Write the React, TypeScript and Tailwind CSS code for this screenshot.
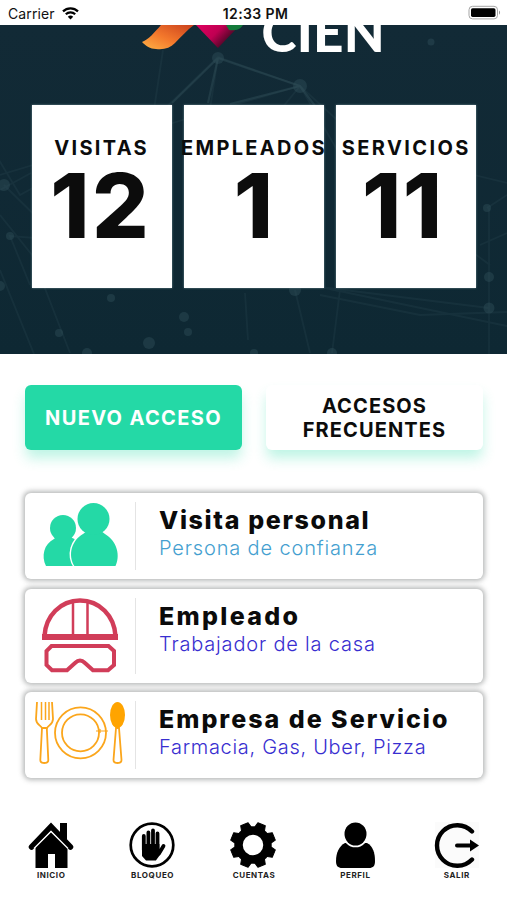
import type { ReactNode } from "react";

interface Stat {
  label: string;
  value: number;
  labelClass: string;
  valueClass: string;
}

interface AccessType {
  title: string;
  detail: string;
  titleClass: string;
  detailClass: string;
  rowClass: string;
  icon: ReactNode;
}

interface NavItem {
  label: string;
  icon: ReactNode;
}

function StatusBar() {
  return (
    <div className="relative z-10 flex h-[25px] shrink-0 items-center justify-between bg-white pl-2 pr-1.5 text-[#111]">
      <div className="flex w-[160px] items-center gap-[7px] pt-0.5">
        <span className="text-[14px] leading-none tracking-[0.1px]">Carrier</span>
        <svg width="17" height="13" viewBox="0 0 17 13" fill="none" stroke="#000" strokeWidth="2.2">
          <path d="M1 4.4a10.6 10.6 0 0 1 15 0" />
          <path d="M3.8 7.3a6.7 6.7 0 0 1 9.4 0" />
          <path d="M8.5 12.6 5.8 9.8a3.9 3.9 0 0 1 5.4 0z" fill="#000" stroke="none" />
        </svg>
      </div>
      <span className="whitespace-nowrap pl-0.5 pt-0.5 text-center text-[14px] font-semibold leading-none tracking-[0.4px]">
        12:33 PM
      </span>
      <div className="flex w-[160px] justify-end">
        <svg width="33" height="15" viewBox="0 0 33 15">
          <rect x="1" y="1.3" width="28.5" height="12.6" rx="3.5" fill="#fff" stroke="#a5a5a5" />
          <rect x="3" y="3.3" width="24.5" height="8.6" rx="1.6" fill="#000" />
          <path d="M31 5.5c1.4.6 1.4 3.6 0 4.2z" fill="#999" />
        </svg>
      </div>
    </div>
  );
}

const NODES = [
  [218, 33, 6], [300, 61, 7], [431, 17, 3.5], [4, 160, 6], [10, 211, 4], [0, 261, 5], [111, 273, 4],
  [184, 292, 5], [188, 307, 4], [149, 318, 6], [59, 308, 4], [87, 328, 5], [487, 183, 4], [489, 252, 5],
  [489, 283, 5.5], [295, 265, 6], [332, 328, 5], [254, 328, 4],
];

const LINKS = [
  "M218 32 300 61 370 125 507 158", "M218 32 150 98 20 170-10 120", "M218 32 206 110", "M163 25 152 98",
  "M300 61 206 88 0 150", "M300 61 340 130 490 240", "M4 160 60 215 10 211 30 260",
  "M0 190 32 230 70 328", "M0 165 31 148", "M489 183V329", "M489 283 320 262 507 301", "M295 265 310 328",
  "M487 183 507 170", "M340 265 332 328", "M245 268 248 315", "M300 61 260 110",
  "M320 270 420 290 507 287", "M480 220 507 208", "M0 245 34 329",
];

function Network() {
  return (
    <svg className="absolute inset-0 h-full w-full" viewBox="0 0 507 329" preserveAspectRatio="none">
      <g fill="none" stroke="#2d4b55" strokeWidth="1.8" opacity="0.25">
        {LINKS.map((d) => (
          <path key={d} d={d} />
        ))}
      </g>
      <g fill="#32525c" opacity="0.42">
        {NODES.map(([x, y, r]) => (
          <circle key={`${x}-${y}`} cx={x} cy={y} r={r} />
        ))}
      </g>
      <path d="M218 33 172 78M218 33l82 28 18 24M218 33l-10 45M300 61l-70 18" stroke="#2d4b55" strokeWidth="2.2" opacity="0.5" fill="none" />
    </svg>
  );
}

function Logo() {
  return (
    <div className="relative flex h-[27px] items-end pl-[142px]">
      <svg width="102" height="27" viewBox="0 0 102 27" className="shrink-0">
        <defs>
          <linearGradient id="ribbon" x1="0" y1="1" x2="1" y2="0">
            <stop offset="0" stopColor="#ffb347" />
            <stop offset="0.45" stopColor="#f4792c" />
            <stop offset="1" stopColor="#c9401d" />
          </linearGradient>
          <linearGradient id="gem" x1="0" y1="0" x2="1" y2="0.5">
            <stop offset="0" stopColor="#e0005f" />
            <stop offset="0.5" stopColor="#c00052" />
            <stop offset="1" stopColor="#1c0a14" />
          </linearGradient>
        </defs>
        <path d="M0 17C7 14 12 8 19 0h33c-7 5-13 12-19 18-5 5-11 7-19 6-6 0-10-3-14-7z" fill="url(#ribbon)" />
        <path d="M54 0h44L76 23z" fill="url(#gem)" />
        <path d="M84 0h17c-3 5-9 6-14 5z" fill="#137a3a" />
      </svg>
      <span className="mb-[3.5px] ml-[17.5px] whitespace-nowrap font-['Lato',sans-serif] text-[53px] font-black leading-[35px] tracking-[0.3px] text-white">
        CIEN
      </span>
    </div>
  );
}

const STATS: Stat[] = [
  { label: "VISITAS", value: 12, labelClass: "tracking-[2.3px]", valueClass: "tracking-[2.5px] mr-[2px]" },
  { label: "EMPLEADOS", value: 1, labelClass: "tracking-[2.3px]", valueClass: "mr-[1px]" },
  { label: "SERVICIOS", value: 11, labelClass: "tracking-[2.4px]", valueClass: "tracking-[1.5px] mr-[7px]" },
];

function StatCard({ stat }: { stat: Stat }) {
  return (
    <div className="flex h-[183px] min-w-0 flex-1 flex-col items-center bg-white pt-[31px] text-[#0c0c0c] shadow-[0_0_2px_#6f8b94]">
      <span className={`whitespace-nowrap text-[20px] font-bold leading-6 ${stat.labelClass}`}>{stat.label}</span>
      <span className={`text-[89px] font-extrabold leading-[92px] ${stat.valueClass}`}>{stat.value}</span>
    </div>
  );
}

function PeopleIcon() {
  return (
    <svg width="100" height="86" viewBox="0 0 100 86" fill="#24d9a6">
      <circle cx="38" cy="35" r="13" />
      <path d="M21 73c-5-10-2-22 8-27l2-2h14l9 4 1 25z" />
      <path
        d="M50 74c-8-12-3-27 8-33l4-3h14l4 3c12 7 16 22 10 33z"
        stroke="#fff"
        strokeWidth="3"
        className="[paint-order:stroke]"
      />
      <circle cx="68.5" cy="26" r="16" />
      <path d="M17 73h79v3H17z" fill="#fff" />
    </svg>
  );
}

function HelmetIcon() {
  return (
    <svg width="100" height="94" viewBox="0 0 100 94" fill="none" stroke="#d13d59">
      <path d="M19.5 47c1-20 16-35.500 35.500-35.500S89.500 27 90.500 47" strokeWidth="4.500" />
      <path d="M17 48h76" strokeWidth="6" />
      <path d="M48 13v33M62.500 13v33" strokeWidth="2.500" />
      <path
        d="M26.500 57h57l5.500 5v14l-6 5.300h-15L60 74q-5-5-10 0l-8 7.300H27L21.500 76V62z"
        strokeWidth="4"
      />
    </svg>
  );
}

function DinnerIcon() {
  return (
    <svg width="104" height="86" viewBox="0 0 104 86" fill="none" stroke="#fba61c" strokeWidth="1.800">
      <circle cx="55.500" cy="40.800" r="25.500" />
      <circle cx="55.500" cy="40.800" r="18.500" />
      <path d="M71 39h12M75 37v4" strokeWidth="1.200" />
      <path d="M12 10l-1 17c0 5 4 6 6 9h5c2-3 6-4 6-9l-1-17" />
      <path d="M16.500 10v18M20.500 10v18M24 10v18" strokeWidth="1.500" />
      <path d="M17 36l-1.700 32c0 4 8 4 8 0L21.800 36z" />
      <path d="M91 36l-2.500 32c0 4 8 4 8 0L94 36z" />
      <ellipse cx="92.500" cy="23" rx="7.500" ry="13" fill="#ffa400" stroke="none" />
    </svg>
  );
}

const ACCESS_TYPES: AccessType[] = [
  {
    title: "Visita personal",
    detail: "Persona de confianza",
    titleClass: "tracking-[1.65px]",
    detailClass: "text-[#459fd0] tracking-[0.85px]",
    rowClass: "h-[86px]",
    icon: <PeopleIcon />,
  },
  {
    title: "Empleado",
    detail: "Trabajador de la casa",
    titleClass: "tracking-[2.3px]",
    detailClass: "text-[#382ed0] tracking-[0.82px]",
    rowClass: "h-[94px]",
    icon: <HelmetIcon />,
  },
  {
    title: "Empresa de Servicio",
    detail: "Farmacia, Gas, Uber, Pizza",
    titleClass: "tracking-[2px]",
    detailClass: "text-[#382ed0] tracking-[0.7px]",
    rowClass: "h-[86px]",
    icon: <DinnerIcon />,
  },
];

function AccessRow({ item }: { item: AccessType }) {
  return (
    <div
      className={`flex rounded-[6px] bg-white shadow-[0_0_5px_2px_rgba(95,100,100,0.45)] ${item.rowClass}`}
    >
      <div className="flex w-[110px] shrink-0 items-center">{item.icon}</div>
      <div className="my-[9px] w-px shrink-0 bg-[#e4e4e4]" />
      <div className="flex flex-col pl-[23px] pt-[13px]">
        <span className={`whitespace-nowrap text-[25px] font-extrabold leading-[29px] text-[#0b0b0b] ${item.titleClass}`}>
          {item.title}
        </span>
        <span className={`whitespace-nowrap text-[20px] font-light leading-[26px] ${item.detailClass}`}>
          {item.detail}
        </span>
      </div>
    </div>
  );
}

const TEETH = [22.5, 67.5, 112.5, 157.5, 202.5, 247.5, 292.5, 337.5];

const NAV_ITEMS: NavItem[] = [
  {
    label: "INICIO",
    icon: (
      <svg width="46" height="46" viewBox="0 0 46 46">
        <path d="M32 1h7v17l-7-7z" />
        <path d="M3.500 25 23 4.500 42.500 25" fill="none" stroke="#000" strokeWidth="5.500" strokeLinecap="round" />
        <path d="M7.500 25 23 9.500 39.500 25v21H27V32h-7v14H7.500z" />
        <path d="M6 26.500 23 9.500l17 17" fill="none" stroke="#fff" strokeWidth="1.300" />
      </svg>
    ),
  },
  {
    label: "BLOQUEO",
    icon: (
      <svg width="46" height="46" viewBox="0 0 46 46">
        <circle cx="23" cy="23" r="21.300" fill="none" stroke="#000" strokeWidth="2.700" />
        <g fill="none" stroke="#000" strokeWidth="3.800" strokeLinecap="round">
          <path d="M14.800 14V28M19.400 10.500V26M24 8.500V26M28.500 11.500V27" />
          <path d="M34.500 24 30 31.500" />
        </g>
        <path d="M13 22h17.400v5l3-2-2.500 8-4 5.500H17L13 34z" />
      </svg>
    ),
  },
  {
    label: "CUENTAS",
    icon: (
      <svg width="48" height="46" viewBox="0 0 48 46">
        {TEETH.map((angle) => (
          <path key={angle} d="M18.500 7 20 0.500h8l1.500 6.500z" transform={`rotate(${angle} 24 23)`} stroke="#000" strokeLinejoin="round" />
        ))}
        <circle cx="24" cy="23" r="14.500" fill="none" stroke="#000" strokeWidth="8.500" />
      </svg>
    ),
  },
  {
    label: "PERFIL",
    icon: (
      <svg width="42" height="46" viewBox="0 0 42 46">
        <path d="M11 21h22c6 3 8 10 8 18 0 5-2 7-6 7H8c-4 0-6-2-6-7 0-8 3-15 9-18z" />
        <ellipse cx="21.500" cy="12" rx="12.800" ry="13.300" fill="#fff" />
        <ellipse cx="21.500" cy="12" rx="11" ry="11.500" />
      </svg>
    ),
  },
  {
    label: "SALIR",
    icon: (
      <svg width="46" height="46" viewBox="0 0 46 46">
        <rect x="2" width="44" height="46" fill="#fbfbfb" />
        <path d="M39 9.500A20.300 20.300 0 1 0 39 37.500" fill="none" stroke="#000" strokeWidth="4.400" strokeLinecap="round" />
        <path d="M24 23.500h15" stroke="#000" strokeWidth="4" strokeLinecap="round" />
        <path d="M37 17.500 46 23.500 37 29.500z" />
      </svg>
    ),
  },
];

export default function App() {
  return (
    <div className="flex h-[900px] w-[507px] flex-col overflow-hidden bg-white font-['Inter',sans-serif]">
      <StatusBar />

      {/* Header with totals */}
      <header className="relative h-[329px] shrink-0 overflow-hidden bg-linear-to-b from-[#122a36] to-[#0e2833]">
        <Network />
        <Logo />
        <div className="relative mt-[53px] flex gap-3 pl-[31.500px] pr-[30.500px]">
          {STATS.map((s) => (
            <StatCard key={s.label} stat={s} />
          ))}
        </div>
      </header>

      {/* Actions */}
      <div className="mt-[31px] flex shrink-0 gap-6 pl-[25px] pr-[24px] text-[20px] font-bold">
        <button className="h-[65px] flex-1 whitespace-nowrap rounded-[6px] bg-[#24d9a6] tracking-[1.35px] text-white shadow-[0_9px_13px_-1px_rgba(36,217,166,0.3)]">
          NUEVO ACCESO
        </button>
        <button className="h-[65px] flex-1 rounded-[6px] bg-white leading-6 tracking-[1.1px] text-[#0c0c0c] shadow-[0_9px_13px_-1px_rgba(36,217,166,0.3)]">
          ACCESOS
          <br />
          FRECUENTES
        </button>
      </div>

      {/* Access types */}
      <div className="mt-[43px] flex shrink-0 flex-col gap-[9.500px] pl-[25px] pr-[24px]">
        {ACCESS_TYPES.map((item) => (
          <AccessRow key={item.title} item={item} />
        ))}
      </div>

      {/* Bottom navigation */}
      <nav className="mt-[44px] grid shrink-0 grid-cols-5">
        {NAV_ITEMS.map((item) => (
          <div key={item.label} className="flex flex-col items-center gap-[1.500px]">
            {item.icon}
            <span className="pl-px text-[8px] font-bold leading-[10px] tracking-[0.6px] text-[#222]">{item.label}</span>
          </div>
        ))}
      </nav>
    </div>
  );
}
